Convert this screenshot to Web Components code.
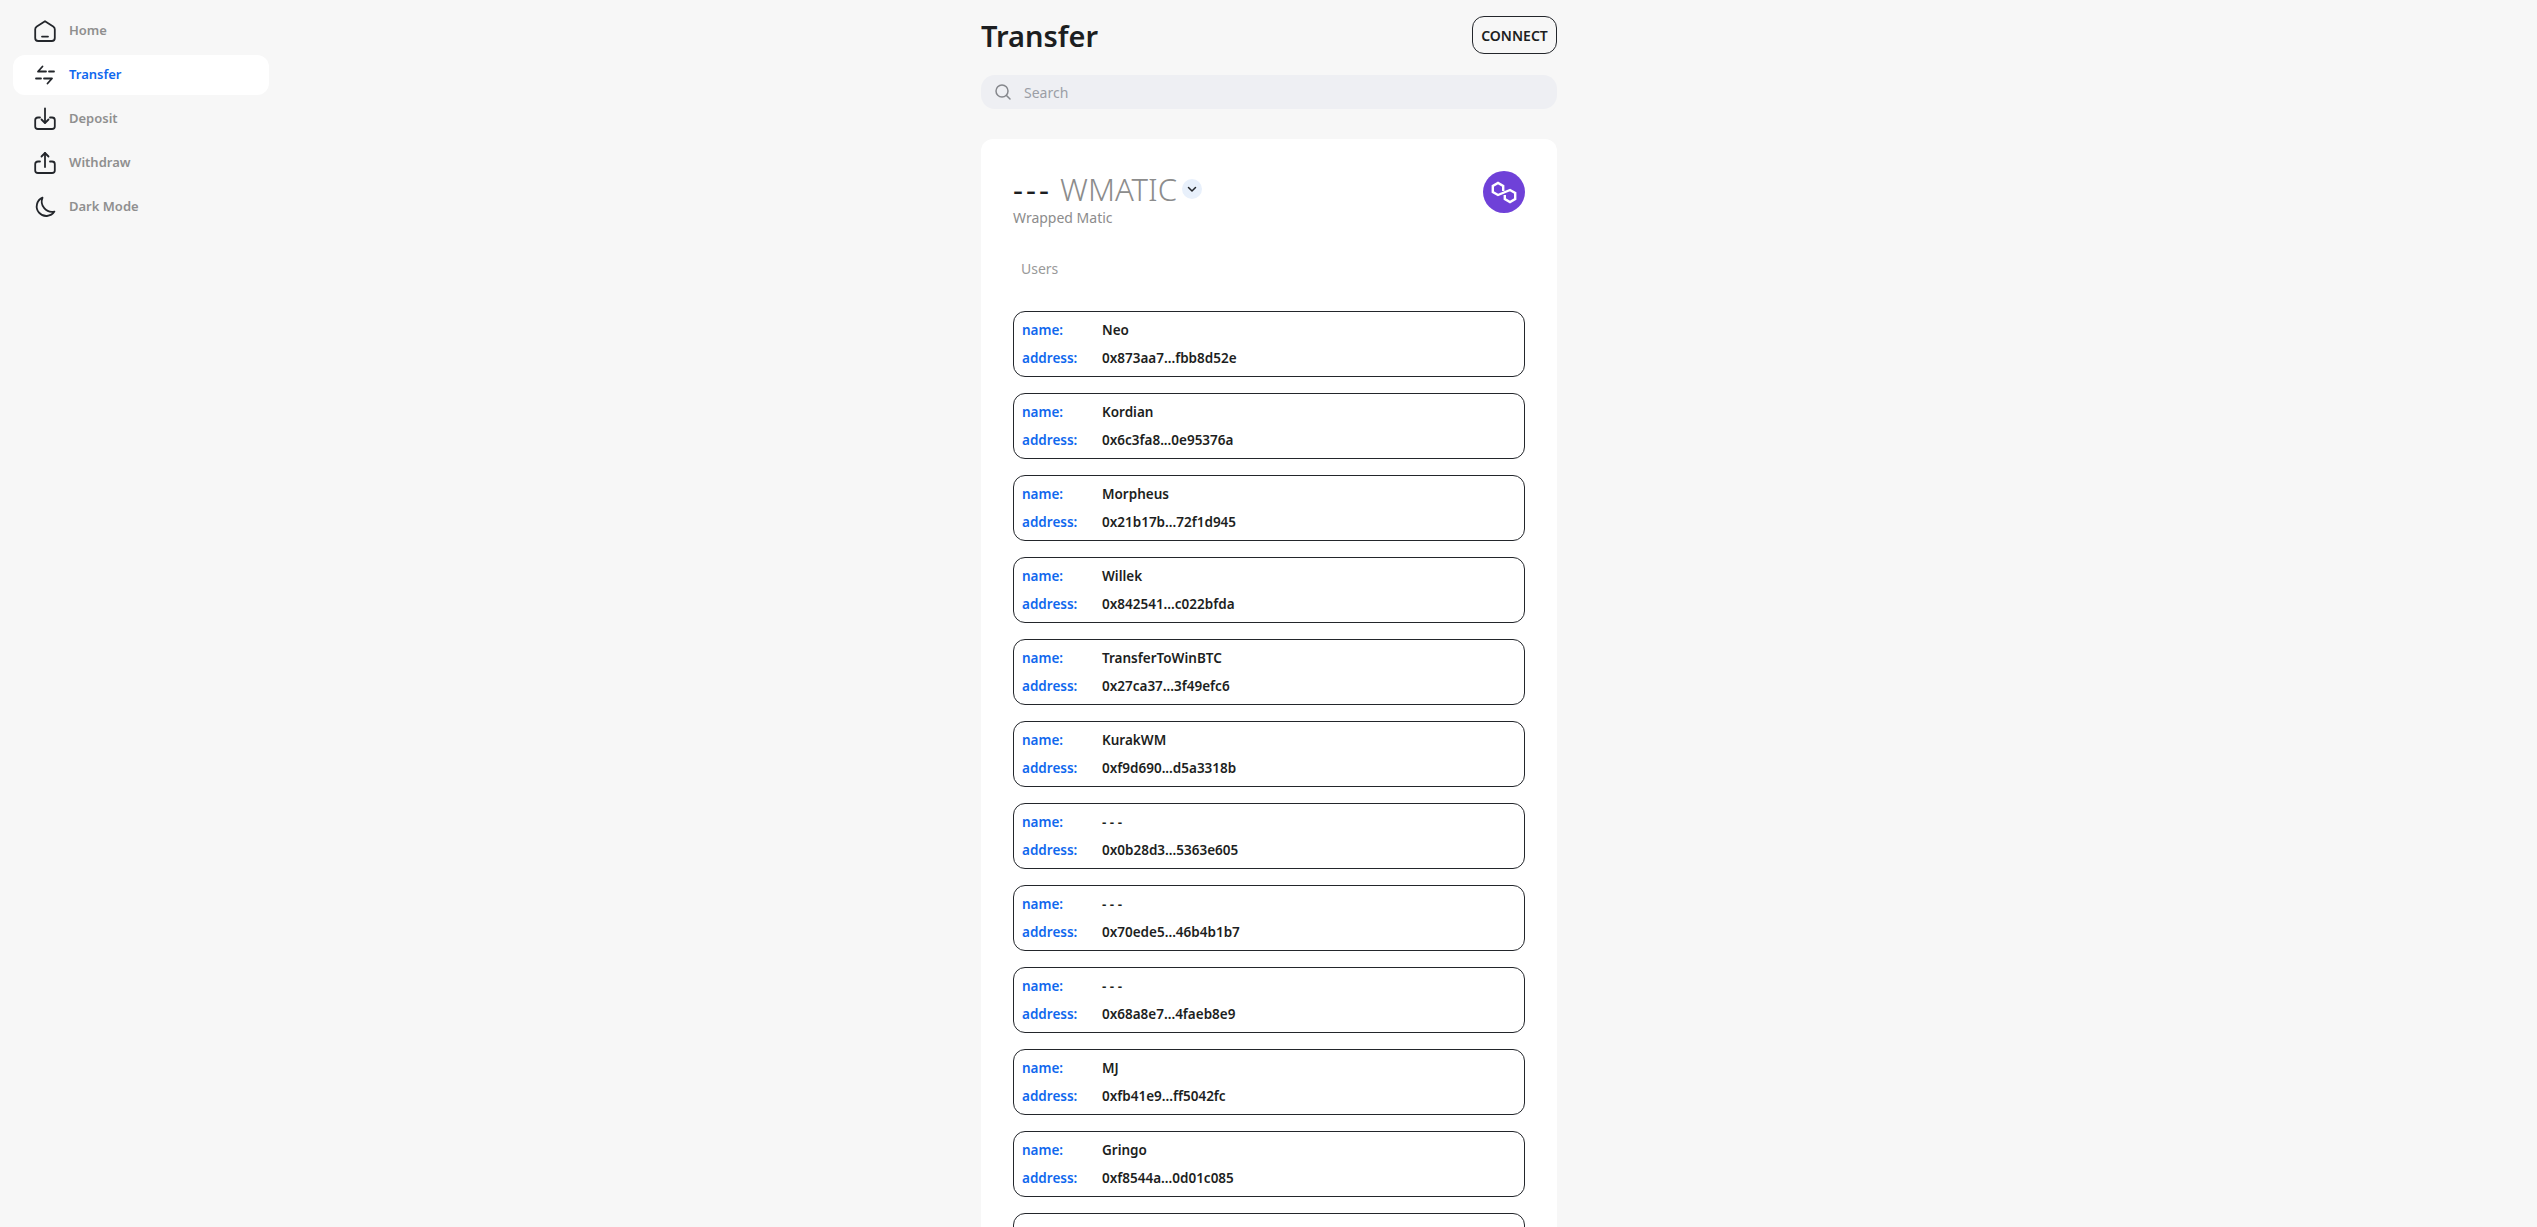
<!DOCTYPE html>
<html lang="en">
<head>
<meta charset="utf-8">
<title>Transfer</title>
<style>
    html, body{
        margin: 0;
        height: 1227px;
        overflow: hidden;
        background-color: #f7f7f7;
        font-family: "Noto Sans", sans-serif;
    }
    .page{
        display: grid;
        grid-template-columns: 981px 576px 1fr;
        height: 1227px;
        overflow: hidden;
    }
</style>
</head>
<body>
<div class="page">
    <app-sidebar>
        <nav-item icon="home">Home</nav-item>
        <nav-item icon="transfer" active>Transfer</nav-item>
        <nav-item icon="deposit">Deposit</nav-item>
        <nav-item icon="withdraw">Withdraw</nav-item>
        <nav-item icon="moon">Dark Mode</nav-item>
    </app-sidebar>
    <main-column>
        <page-header>Transfer</page-header>
        <search-bar></search-bar>
        <token-card>
            <user-row name="Neo" address="0x873aa7...fbb8d52e"></user-row>
            <user-row name="Kordian" address="0x6c3fa8...0e95376a"></user-row>
            <user-row name="Morpheus" address="0x21b17b...72f1d945"></user-row>
            <user-row name="Willek" address="0x842541...c022bfda"></user-row>
            <user-row name="TransferToWinBTC" address="0x27ca37...3f49efc6"></user-row>
            <user-row name="KurakWM" address="0xf9d690...d5a3318b"></user-row>
            <user-row name="- - -" address="0x0b28d3...5363e605"></user-row>
            <user-row name="- - -" address="0x70ede5...46b4b1b7"></user-row>
            <user-row name="- - -" address="0x68a8e7...4faeb8e9"></user-row>
            <user-row name="MJ" address="0xfb41e9...ff5042fc"></user-row>
            <user-row name="Gringo" address="0xf8544a...0d01c085"></user-row>
            <user-row></user-row>
        </token-card>
    </main-column>
</div>

<script>
const _icons = {
    home: `<path d="M12 2.2 L20.2 7.4 Q21.8 8.4 21.8 10.2 V19 Q21.8 22 18.8 22 H5.2 Q2.2 22 2.2 19 V10.2 Q2.2 8.4 3.8 7.4 Z"/><path d="M9 17.6 H15"/>`,
    transfer: `<path d="M9.5 3.5 L5 8.5 H13"/><path d="M16 8.5 H21"/><path d="M14.5 20.5 L19 15.5 H11"/><path d="M8 15.5 H3"/>`,
    deposit: `<path d="M7 10.5 H5 Q2.2 10.5 2.2 13 V19.5 Q2.2 22 5 22 H19 Q21.8 22 21.8 19.5 V13 Q21.8 10.5 19 10.5 H17"/><path d="M12 1.5 V15.5"/><path d="M8.5 12.5 L12 16 L15.5 12.5"/>`,
    withdraw: `<path d="M7 10.5 H5 Q2.2 10.5 2.2 13 V19.5 Q2.2 22 5 22 H19 Q21.8 22 21.8 19.5 V13 Q21.8 10.5 19 10.5 H17"/><path d="M12 16 V2"/><path d="M8.5 5.5 L12 2 L15.5 5.5"/>`,
    moon: `<path d="M9.5 2.6 A9.6 9.6 0 1 0 21.4 16.6 A10.4 10.4 0 0 1 9.5 2.6 Z"/>`
};

class AppSidebar extends HTMLElement{
    constructor() {
        super();
        const shadow = this.attachShadow({ mode: "open" });
        shadow.innerHTML = /* html */`
            <style>
                :host{
                    display: block;
                    width: 256px;
                    margin-left: 13px;
                    padding-top: 11px;
                }
                .list{
                    display: flex;
                    flex-direction: column;
                    gap: 4px;
                }
            </style>
            <div class="list"><slot></slot></div>
        `;
    }
}

class NavItem extends HTMLElement{
    constructor() {
        super();
        const shadow = this.attachShadow({ mode: "open" });
        const icon = _icons[this.getAttribute("icon")];
        shadow.innerHTML = /* html */`
            <style>
                :host{
                    display: flex;
                    align-items: center;
                    gap: 12px;
                    height: 40px;
                    padding-left: 20px;
                    border-radius: 12px;
                    font-size: 13px;
                    font-weight: 600;
                    color: #8f8f8f;
                }
                :host([active]){
                    background-color: white;
                    color: #1068ee;
                }
                span{
                    position: relative;
                    top: -1px;
                }
                svg{
                    width: 24px;
                    height: 24px;
                    flex: none;
                    fill: none;
                    stroke: #23262b;
                    stroke-width: 1.8;
                    stroke-linecap: round;
                    stroke-linejoin: round;
                }
            </style>
            <svg viewBox="0 0 24 24">${icon}</svg>
            <span><slot></slot></span>
        `;
    }
}

class MainColumn extends HTMLElement{
    constructor() {
        super();
        const shadow = this.attachShadow({ mode: "open" });
        shadow.innerHTML = /* html */`
            <style>
                :host{
                    display: block;
                    padding-top: 16px;
                }
            </style>
            <slot></slot>
        `;
    }
}

class PageHeader extends HTMLElement{
    constructor() {
        super();
        const shadow = this.attachShadow({ mode: "open" });
        shadow.innerHTML = /* html */`
            <style>
                :host{
                    display: flex;
                    justify-content: space-between;
                    align-items: center;
                    height: 38px;
                }
                h1{
                    margin: 0;
                    font-size: 29px;
                    font-weight: 600;
                    color: #1c1e21;
                }
                button{
                    width: 85px;
                    height: 38px;
                    padding: 0;
                    font: 600 14px "Noto Sans", sans-serif;
                    color: #1c1e21;
                    background: transparent;
                    border: 1px solid #23262b;
                    border-radius: 12px;
                }
            </style>
            <h1><slot></slot></h1>
            <button>CONNECT</button>
        `;
    }
}

class SearchBar extends HTMLElement{
    constructor() {
        super();
        const shadow = this.attachShadow({ mode: "open" });
        shadow.innerHTML = /* html */`
            <style>
                :host{
                    display: flex;
                    align-items: center;
                    gap: 12px;
                    height: 34px;
                    margin-top: 21px;
                    padding-left: 13px;
                    border-radius: 14px;
                    background-color: #eeeff3;
                }
                svg{
                    width: 18px;
                    height: 18px;
                    fill: none;
                    stroke: #85878c;
                    stroke-width: 1.5;
                    stroke-linecap: round;
                }
                input{
                    flex: 1;
                    border: none;
                    outline: none;
                    padding: 0;
                    background: transparent;
                    font: 400 14px "Noto Sans", sans-serif;
                }
                input::placeholder{
                    color: #9b9ea6;
                }
            </style>
            <svg viewBox="0 0 18 18"><circle cx="8" cy="8" r="6"/><path d="M12.5 12.5 L16 16"/></svg>
            <input type="text" placeholder="Search" spellcheck="false">
        `;
    }
}

class TokenCard extends HTMLElement{
    constructor() {
        super();
        const shadow = this.attachShadow({ mode: "open" });
        shadow.innerHTML = /* html */`
            <style>
                :host{
                    display: block;
                    margin-top: 30px;
                    padding: 28px 32px 0;
                    border-radius: 12px 12px 0 0;
                    background-color: white;
                }
                .top{
                    display: flex;
                    justify-content: space-between;
                    align-items: flex-start;
                }
                .amount{
                    display: flex;
                    align-items: center;
                    gap: 5px;
                    height: 44px;
                    font-size: 31px;
                    font-weight: 300;
                    color: #8c8c8c;
                }
                .amount b{
                    font-weight: 400;
                    letter-spacing: 3px;
                    color: #1c1e21;
                }
                .chevron{
                    width: 20px;
                    height: 20px;
                    border-radius: 50%;
                    background-color: #e8f0fb;
                    fill: none;
                    stroke: #23262b;
                    stroke-width: 1.5;
                    stroke-linecap: round;
                    stroke-linejoin: round;
                }
                .full-name{
                    margin-top: -3px;
                    font-size: 14px;
                    line-height: 19px;
                    color: #8c8c8c;
                }
                .logo{
                    width: 42px;
                    height: 42px;
                    margin-top: 4px;
                    flex: none;
                }
                .tab{
                    margin: 32px 0 0 8px;
                    font-size: 14px;
                    line-height: 19px;
                    color: #999;
                }
                .rows{
                    display: flex;
                    flex-direction: column;
                    gap: 16px;
                    margin-top: 33px;
                }
            </style>
            <div class="top">
                <div>
                    <div class="amount"><span><b>---</b> WMATIC</span>
                        <svg class="chevron" viewBox="0 0 20 20"><path d="M6.5 8.5 L10 12 L13.5 8.5"/></svg>
                    </div>
                    <div class="full-name">Wrapped Matic</div>
                </div>
                <svg class="logo" viewBox="0 0 42 42">
                    <circle cx="21" cy="21" r="21" fill="#6f41d8"/>
                    <path d="M20.2 20 V15 L15 12 L9.8 15 V21 L15 24 L27 19 L32.2 22 V28 L27 31 L21.8 28 V24" fill="none" stroke="white" stroke-width="2.4"/>
                </svg>
            </div>
            <div class="tab">Users</div>
            <div class="rows"><slot></slot></div>
        `;
    }
}

class UserRow extends HTMLElement{
    constructor() {
        super();
        const shadow = this.attachShadow({ mode: "open" });
        // the last row is only a border in the shot, its text is below the fold
        const address = this.getAttribute("address");
        const body = address ? `
            <span class="key">name:</span><span>${this.getAttribute("name")}</span>
            <span class="key">address:</span><span>${address}</span>
        ` : "";
        shadow.innerHTML = /* html */`
            <style>
                :host{
                    display: grid;
                    grid-template-columns: 80px 1fr;
                    grid-auto-rows: 28px;
                    align-items: center;
                    box-sizing: border-box;
                    height: 66px;
                    padding: 4px 8px;
                    border: 1px solid #23262b;
                    border-radius: 12px;
                    font-size: 13.5px;
                    font-weight: 600;
                    color: #1c1e21;
                }
                .key{
                    color: #1068ee;
                }
            </style>
            ${body}
        `;
    }
}

customElements.define("app-sidebar", AppSidebar);
customElements.define("nav-item", NavItem);
customElements.define("main-column", MainColumn);
customElements.define("page-header", PageHeader);
customElements.define("search-bar", SearchBar);
customElements.define("token-card", TokenCard);
customElements.define("user-row", UserRow);
</script>
</body>
</html>
